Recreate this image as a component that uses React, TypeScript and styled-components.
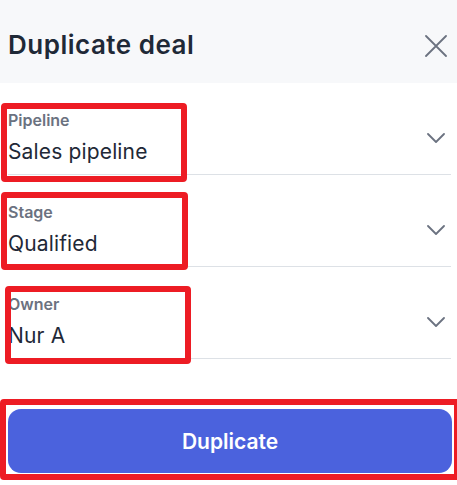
import React from 'react';
import styled, { createGlobalStyle } from 'styled-components';

const GlobalStyle = createGlobalStyle`
  html, body {
    margin: 0;
    padding: 0;
    background: #ffffff;
    font-family: "Inter", "Liberation Sans", sans-serif;
    overflow: hidden;
  }
`;

type Box = { left: number; top: number; width: number; height: number };

const fields: { label: string; value: string; mark: Box }[] = [
  { label: 'Pipeline', value: 'Sales pipeline', mark: { left: -7, top: 20, width: 186, height: 79 } },
  { label: 'Stage', value: 'Qualified', mark: { left: -7, top: 17, width: 187, height: 78 } },
  { label: 'Owner', value: 'Nur A', mark: { left: -3, top: 19, width: 186, height: 78 } },
];

const App: React.FC = () => {
  return (
    <Page>
      <GlobalStyle />
      <Header>
        <Title>Duplicate deal</Title>
        <CloseButton aria-label="Close">
          <svg width="22" height="22" viewBox="0 0 22 22" fill="none">
            <path d="M1 1L21 21M21 1L1 21" stroke="#6b7280" strokeWidth="1.8" strokeLinecap="round" />
          </svg>
        </CloseButton>
      </Header>

      <Form>
        {fields.map((f) => (
          <Field key={f.label}>
            <Row>
              <Texts>
                <Label>{f.label}</Label>
                <Value>{f.value}</Value>
              </Texts>
              <Chevron width="18" height="10" viewBox="0 0 18 10" fill="none">
                <path d="M1 1L9 9L17 1" stroke="#6b7280" strokeWidth="1.8" strokeLinecap="round" strokeLinejoin="round" />
              </Chevron>
            </Row>
            <Mark
              $left={f.mark.left}
              $top={f.mark.top}
              $width={f.mark.width}
              $height={f.mark.height}
            />
          </Field>
        ))}
      </Form>

      <Footer>
        <SubmitButton>Duplicate</SubmitButton>
        <Mark $left={-8} $top={-10} $width={460} $height={81} />
      </Footer>
    </Page>
  );
};

export default App;

const Page = styled.div`
  width: 457px;
  height: 485px;
  overflow: hidden;
`;

const Header = styled.div`
  height: 83px;
  box-sizing: border-box;
  padding: 30px 10px 0 8px;
  background: #f7f8fa;
  display: flex;
  align-items: flex-start;
  justify-content: space-between;
`;

const Title = styled.h1`
  margin: 0;
  font-size: 26px;
  line-height: 30px;
  font-weight: 600;
  letter-spacing: 0.5px;
  color: #1f2937;
`;

const CloseButton = styled.button`
  border: none;
  background: none;
  padding: 0;
  margin-top: 5px;
  display: flex;
  cursor: pointer;
`;

const Form = styled.div`
  padding: 0 6px 0 8px;
`;

const Field = styled.div`
  position: relative;
  height: 92px;
  box-sizing: border-box;
  border-bottom: 1.5px solid #dde1e6;
  display: flex;
  flex-direction: column;
  justify-content: flex-end;
  padding-bottom: 8px;
`;

const Row = styled.div`
  display: flex;
  align-items: center;
  justify-content: space-between;
`;

const Chevron = styled.svg`
  margin-right: 6px;
`;

const Texts = styled.div`
  display: flex;
  flex-direction: column;
  gap: 8px;
`;

const Label = styled.span`
  font-size: 16px;
  line-height: 20px;
  font-weight: 600;
  color: #6b7280;
`;

const Value = styled.span`
  font-size: 21px;
  line-height: 28px;
  letter-spacing: 0.15px;
  color: #1f2937;
`;

const Mark = styled.div<{ $left: number; $top: number; $width: number; $height: number }>`
  position: absolute;
  left: ${(p) => p.$left}px;
  top: ${(p) => p.$top}px;
  width: ${(p) => p.$width}px;
  height: ${(p) => p.$height}px;
  box-sizing: border-box;
  border: 6px solid #ed1c24;
  border-radius: 4px;
  pointer-events: none;
`;

const Footer = styled.div`
  position: relative;
  margin: 50px 5px 0 8px;
`;

const SubmitButton = styled.button`
  width: 100%;
  height: 64px;
  border: none;
  border-radius: 13px;
  background: #4b62dd;
  color: #ffffff;
  font-family: "Inter", "Liberation Sans", sans-serif;
  font-size: 21px;
  font-weight: 600;
  cursor: pointer;
`;
